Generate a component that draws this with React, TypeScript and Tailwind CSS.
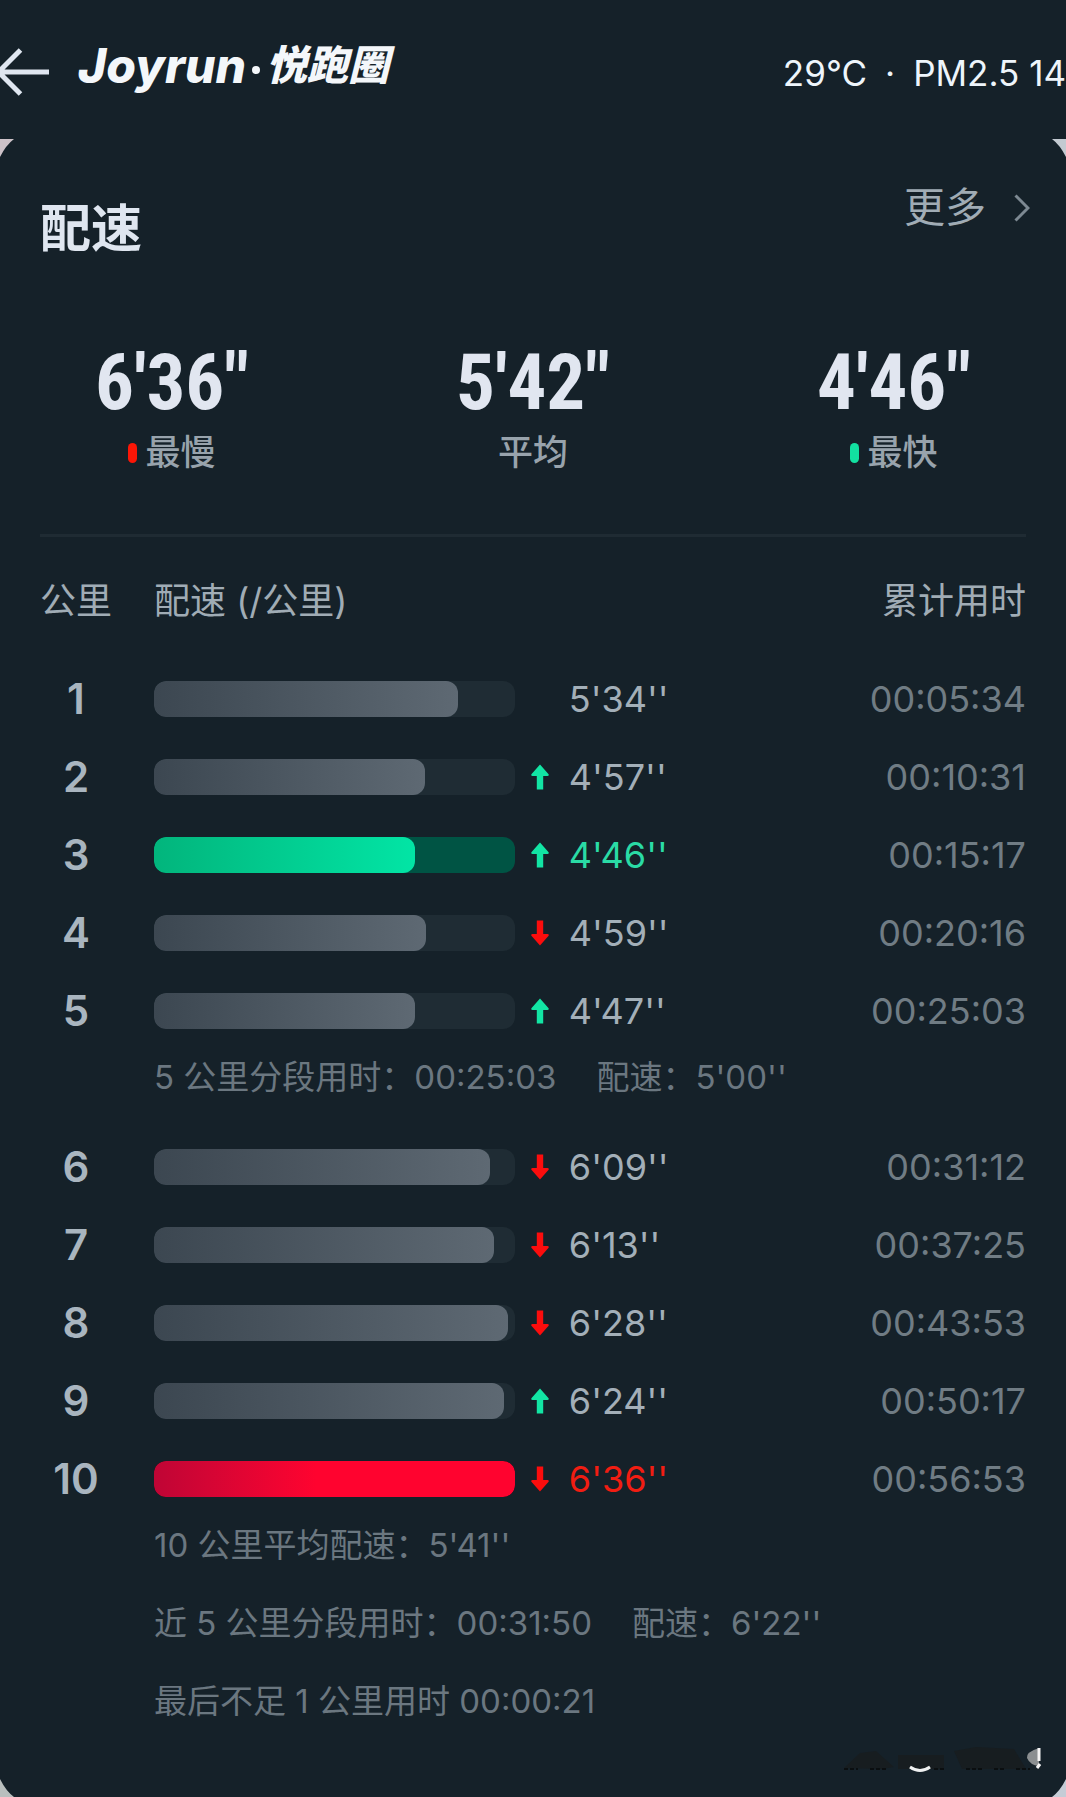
import React from "react";

type Trend = "up" | "down" | null;

interface Split {
  km: number;
  pace: string;
  seconds: number;
  trend: Trend;
  total: string;
}

const firstHalf: Split[] = [
  { km: 1, pace: "5'34''", seconds: 334, trend: null, total: "00:05:34" },
  { km: 2, pace: "4'57''", seconds: 297, trend: "up", total: "00:10:31" },
  { km: 3, pace: "4'46''", seconds: 286, trend: "up", total: "00:15:17" },
  { km: 4, pace: "4'59''", seconds: 299, trend: "down", total: "00:20:16" },
  { km: 5, pace: "4'47''", seconds: 287, trend: "up", total: "00:25:03" },
];

const secondHalf: Split[] = [
  { km: 6, pace: "6'09''", seconds: 369, trend: "down", total: "00:31:12" },
  { km: 7, pace: "6'13''", seconds: 373, trend: "down", total: "00:37:25" },
  { km: 8, pace: "6'28''", seconds: 388, trend: "down", total: "00:43:53" },
  { km: 9, pace: "6'24''", seconds: 384, trend: "up", total: "00:50:17" },
  { km: 10, pace: "6'36''", seconds: 396, trend: "down", total: "00:56:53" },
];

const stats = [
  { value: "6'36\"", label: "最慢", dot: "bg-[#fb1606]" },
  { value: "5'42\"", label: "平均", dot: "" },
  { value: "4'46\"", label: "最快", dot: "bg-[#12e0a0]" },
];

const paces = [...firstHalf, ...secondHalf].map((s) => s.seconds);
const slowest = Math.max(...paces);
const fastest = Math.min(...paces);

const TrendArrow = ({ trend }: { trend: Trend }) => {
  if (!trend) return null;
  return (
    <svg
      viewBox="0 0 18 26"
      className={
        trend === "up"
          ? "w-[18px] h-[26px] text-[#12e5a4]"
          : "w-[18px] h-[26px] text-[#fb0d0d] rotate-180"
      }
      fill="currentColor"
      aria-hidden="true"
    >
      <path d="M9 0.5 17.6 10.2Q18.2 12 16.5 12H12.2V25.5H5.8V12H1.5Q-0.2 12 0.4 10.2Z" />
    </svg>
  );
};

const SplitRow = ({ split }: { split: Split }) => {
  const isFastest = split.seconds === fastest;
  const isSlowest = split.seconds === slowest;

  let track = "bg-[#1f2c34]";
  let fill = "from-[#3c4751] to-[#5e6973]";
  let text = "text-[#a3afb8]";
  if (isFastest) {
    track = "bg-[#005444]";
    fill = "from-[#02b57c] to-[#02e5a5]";
    text = "text-[#2adba5]";
  } else if (isSlowest) {
    track = "bg-[#4a0a1c]";
    fill = "from-[#bf0535] via-[#ff032f] via-45% to-[#ff032f]";
    text = "text-[#f11d12]";
  }

  return (
    <tr className="h-[78px]">
      <th
        scope="row"
        className="text-[42px] leading-none font-semibold text-[#a9b5bf] pr-[42px]"
      >
        <span className="flex justify-center">{split.km}</span>
      </th>
      <td className="pr-1">
        <div className={`h-9 rounded-xl overflow-hidden ${track}`}>
          <div
            className={`h-full rounded-xl bg-linear-to-r ${fill}`}
            style={{ width: `${(split.seconds / slowest) * 100}%` }}
          />
        </div>
      </td>
      <td className="pl-3">
        <TrendArrow trend={split.trend} />
      </td>
      <td className={`text-4xl ${text}`}>{split.pace}</td>
      <td className="text-4xl text-right text-[#707c84]">{split.total}</td>
    </tr>
  );
};

const NoteRow = ({ children }: { children: React.ReactNode }) => (
  <tr className="h-[78px]">
    <td />
    <td colSpan={4} className="pb-6 text-[33px] leading-none text-[#6b7780]">
      {children}
    </td>
  </tr>
);

// Piece of the map that shows behind the card's rounded corner
const Corner = ({ className }: { className: string }) => (
  <svg
    viewBox="0 0 14 18"
    className={`absolute w-[14px] h-[18px] ${className}`}
    fill="currentColor"
    aria-hidden="true"
  >
    <path d="M0 0H14Q6 6 0 18Z" />
  </svg>
);

export default function App() {
  return (
    <div className="min-h-screen flex flex-col overflow-hidden bg-[#152129] font-[family-name:Inter,'Noto_Sans_CJK_SC',sans-serif]">
      {/* HEADER */}
      <header className="h-[139px] pb-2 flex items-center justify-between whitespace-nowrap">
        <div className="flex items-center">
          <button aria-label="返回" className="pt-3">
            <svg
              viewBox="0 0 50 50"
              className="w-[50px] h-[50px]"
              fill="none"
              stroke="#dfe6f0"
              strokeWidth="5"
              aria-hidden="true"
            >
              <path d="M49 25H-1M20.500 3-1.500 25 20.500 47" />
            </svg>
          </button>
          <h1 className="pl-7 flex items-center gap-1.5 text-[#f4f7fa] italic font-bold">
            <span className="text-5xl font-extrabold">Joyrun</span>
            <span className="mt-2 size-2 rounded-full bg-current" />
            <span className="text-[41px] font-black">悦跑圈</span>
          </h1>
        </div>
        <p className="pt-4 flex gap-[18px] text-[35px] leading-none text-[#eef5fb]">
          <span>29°C</span>
          <span>·</span>
          <span>PM2.5 14</span>
        </p>
      </header>

      {/* PACE CARD */}
      <section className="relative grow flex flex-col">
        <Corner className="top-0 left-0 text-[#cdc2c8]" />
        <Corner className="top-0 right-0 -scale-x-100 text-[#c3cad1]" />
        <Corner className="bottom-0 left-0 -scale-y-100 text-[#b9bfbe]" />
        <Corner className="bottom-0 right-0 -scale-100 text-[#c5ccd6]" />

        <div className="pl-10 pr-9 pt-11 flex items-start justify-between">
          <h2 className="pt-5 text-[51px] leading-none font-bold text-[#dfe6f0]">
            配速
          </h2>
          <a
            href="#more"
            className="pt-1 flex items-center gap-7 text-[41px] leading-none text-[#a0acb5]"
          >
            更多
            <svg
              viewBox="0 0 16 28"
              className="w-4 h-7"
              fill="none"
              stroke="#7d8992"
              strokeWidth="3"
              aria-hidden="true"
            >
              <path d="M1.500 1.500 14 14 1.500 26.500" />
            </svg>
          </a>
        </div>

        <dl className="px-[100px] pt-[89px] flex justify-between">
          {stats.map(({ value, label, dot }) => (
            <div
              key={label}
              className="w-36 flex flex-col-reverse items-center gap-3"
            >
              <dt className="flex items-center gap-2 text-[35px] leading-none font-medium text-[#98a3ac]">
                {dot && <span className={`w-[9px] h-5 rounded-full ${dot}`} />}
                {label}
              </dt>
              <dd className="text-[77px] leading-20 font-bold text-[#e1e6f0] font-[family-name:'Roboto_Condensed',sans-serif]">
                {value}
              </dd>
            </div>
          ))}
        </dl>

        {/* SPLITS */}
        <div className="mx-10 mt-16 border-t-3 border-[#1f2b33]">
          <table className="w-full table-fixed text-left">
            <thead>
              <tr className="h-[123px] text-4xl text-[#a0acb5]">
                <th className="w-[114px] pt-1 font-normal">公里</th>
                <th className="w-[37%] pt-1 font-normal">配速 (/公里)</th>
                <th className="w-[50px]" />
                <th />
                <th className="pt-1 font-normal text-right">累计用时</th>
              </tr>
            </thead>
            <tbody>
              {firstHalf.map((split) => (
                <SplitRow key={split.km} split={split} />
              ))}
              <NoteRow>
                5 公里分段用时：00:25:03
                <span className="pl-10">配速：5'00''</span>
              </NoteRow>
              {secondHalf.map((split) => (
                <SplitRow key={split.km} split={split} />
              ))}
              <NoteRow>10 公里平均配速：5'41''</NoteRow>
              <NoteRow>
                近 5 公里分段用时：00:31:50
                <span className="pl-10">配速：6'22''</span>
              </NoteRow>
              <NoteRow>最后不足 1 公里用时 00:00:21</NoteRow>
            </tbody>
          </table>
        </div>

        {/* Faded watermark */}
        <svg
          viewBox="0 0 200 30"
          className="absolute right-6 bottom-6 w-[200px] h-[30px]"
          fill="none"
          aria-hidden="true"
        >
          <g fill="#171d20">
            <path d="M2 25 18 10 34 8 52 24 40 26Z" />
            <path d="M56 12H102V26H56Z" />
            <path d="M112 8 134 4 172 6 184 26H120Z" />
          </g>
          <path
            d="M2 26h14M28 26h16M92 26h12M124 26h18M152 26h12M174 26h14"
            stroke="#0a0e10"
            strokeWidth="2"
            strokeDasharray="4 2"
          />
          <path d="M68 24Q78 31 88 24" stroke="#eef0f0" strokeWidth="3" />
          <path d="M197 5Q184 9 185 15 188 22 197 23Z" fill="#8b8f91" />
          <path d="M197 5V18M198 21 195 25" stroke="#f4f4f4" strokeWidth="3" />
        </svg>
      </section>
    </div>
  );
}
